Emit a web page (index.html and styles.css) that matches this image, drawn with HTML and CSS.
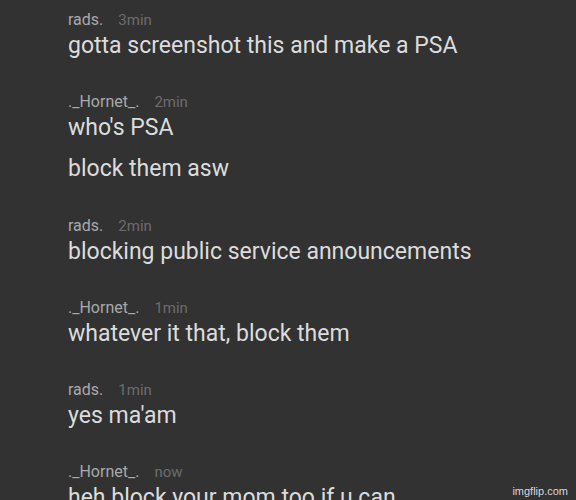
FILE: index.html
```html
<!DOCTYPE html>
<html>
<head>
<meta charset="utf-8">
<link rel="stylesheet" href="styles.css">
</head>
<body>
<div class="chat">
  <div class="group">
    <div class="head"><span class="user">rads.</span><span class="time">3min</span></div>
    <div class="msg">gotta screenshot this and make a PSA</div>
  </div>
  <div class="group">
    <div class="head"><span class="user">._Hornet_.</span><span class="time">2min</span></div>
    <div class="msg">who's PSA</div>
    <div class="msg">block them asw</div>
  </div>
  <div class="group">
    <div class="head"><span class="user">rads.</span><span class="time">2min</span></div>
    <div class="msg">blocking public service announcements</div>
  </div>
  <div class="group">
    <div class="head"><span class="user">._Hornet_.</span><span class="time">1min</span></div>
    <div class="msg">whatever it that, block them</div>
  </div>
  <div class="group">
    <div class="head"><span class="user">rads.</span><span class="time">1min</span></div>
    <div class="msg">yes ma'am</div>
  </div>
  <div class="group">
    <div class="head"><span class="user">._Hornet_.</span><span class="time">now</span></div>
    <div class="msg">heh block your mom too if u can</div>
  </div>
</div>
<div class="watermark">imgflip.com</div>
</body>
</html>
```

FILE: styles.css
```css
html, body {
  margin: 0;
  padding: 0;
  background: #323232;
  height: 500px;
  overflow: hidden;
}
body {
  font-family: Roboto, "Liberation Sans", sans-serif;
  position: relative;
}
.chat {
  padding: 10px 0 0 68px;
  display: flex;
  flex-direction: column;
  gap: 30.3px;
}
.group {
  display: flex;
  flex-direction: column;
}
.head {
  height: 20px;
  line-height: 20px;
  display: flex;
  align-items: baseline;
  gap: 15px;
}
.user {
  font-size: 16px;
  color: #a9a9a9;
}
.time {
  font-size: 15px;
  color: #6c6c6c;
}
.msg {
  font-size: 23px;
  line-height: 32px;
  color: #dcdcdc;
}
.msg + .msg {
  margin-top: 9px;
}
.watermark {
  position: absolute;
  right: 8px;
  bottom: 3px;
  font-size: 11px;
  color: #d8d8d8;
  font-family: "Liberation Sans", Arial, sans-serif;
}
```
